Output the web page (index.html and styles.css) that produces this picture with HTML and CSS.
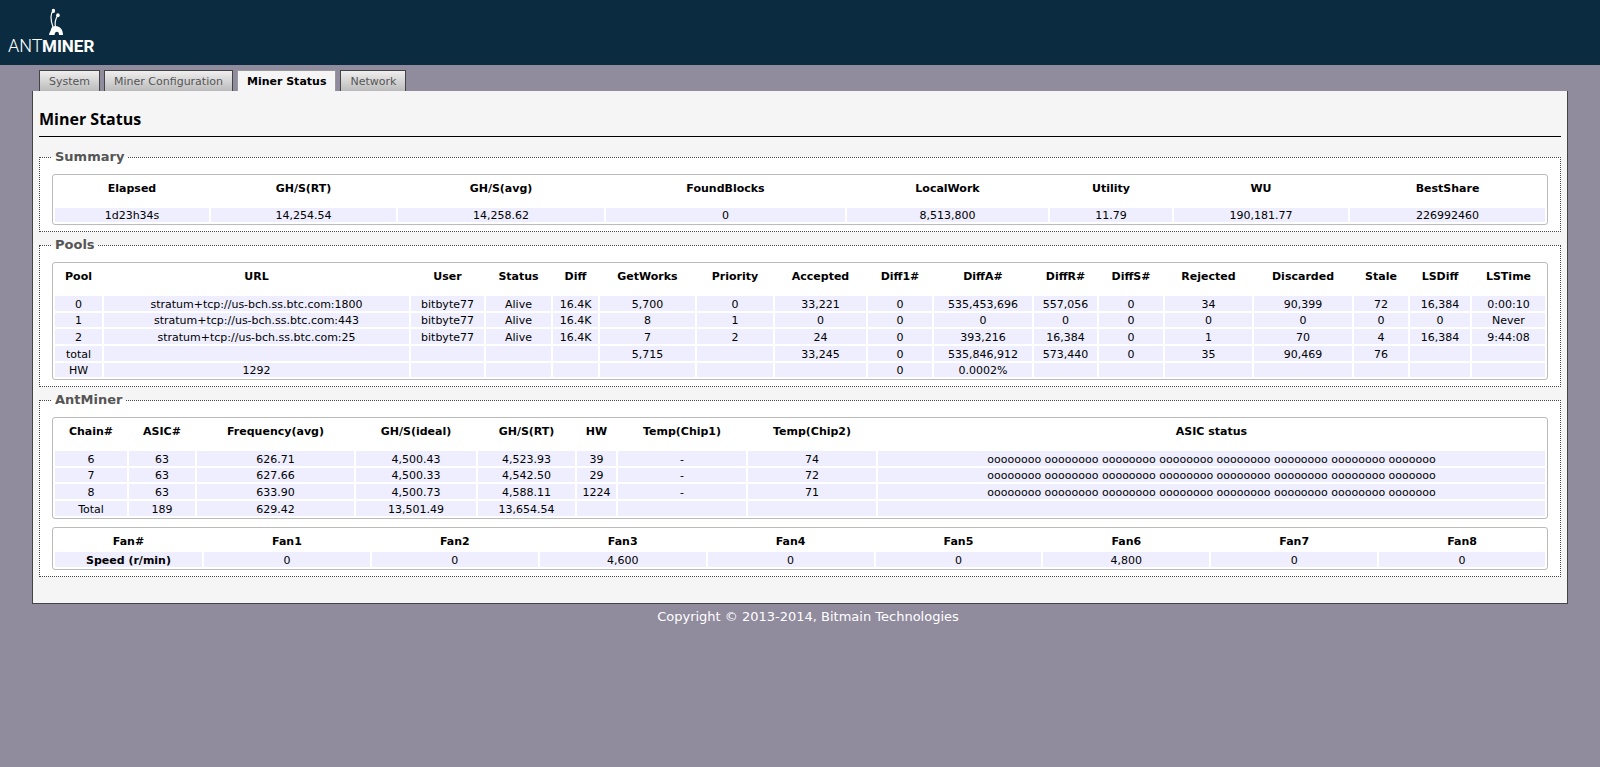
FILE: index.html
```html
<!DOCTYPE html>
<html lang="en">
<head>
<meta charset="utf-8">
<title>Miner Status</title>
<link rel="stylesheet" href="styles.css">
</head>
<body>
<header class="header">
  <svg class="logo" viewBox="0 0 92 48" role="img" aria-label="AntMiner">
    <g fill="none" stroke="#fff">
      <path d="M45 19C43.500 15 43 12 43 9C43 6 43.700 4.500 45 3" stroke-width="1.200"/>
      <path d="M47.500 19.500C46.500 15 47 11.500 49.700 7.500" stroke-width="1.200"/>
    </g>
    <ellipse cx="45.400" cy="2.900" rx="1.700" ry="2.100" fill="#fff"/>
    <ellipse cx="49.900" cy="7.300" rx="1.800" ry="2" fill="#fff"/>
    <path d="M41 27C41.500 24 43 22.500 43.300 20.500C44 18.700 45.500 18 47.500 18C52 18 55 21.500 55 27H51C51 24.800 50.300 23.800 49 23.800C47.500 23.800 46.800 25 46.500 27Z" fill="#fff"/>
    <text class="logo-light" x="0" y="44">ANT</text>
    <text class="logo-bold" x="34" y="44">MINER</text>
  </svg>
</header>
<div class="page">
  <nav>
    <ul class="tabs">
      <li><a class="tab" href="#system">System</a></li>
      <li><a class="tab" href="#configuration">Miner Configuration</a></li>
      <li><a class="tab tab-active" href="#status" aria-current="page">Miner Status</a></li>
      <li><a class="tab" href="#network">Network</a></li>
    </ul>
  </nav>
  <main class="content">
    <h1 class="title">Miner Status</h1>
    <fieldset class="section">
      <legend>Summary</legend>
      <table class="grid summary">
        <colgroup><col class="s1"><col class="s2"><col class="s3"><col class="s4"><col class="s5"><col class="s6"><col class="s7"><col class="s8"></colgroup>
        <thead><tr><th>Elapsed</th><th>GH/S(RT)</th><th>GH/S(avg)</th><th>FoundBlocks</th><th>LocalWork</th><th>Utility</th><th>WU</th><th>BestShare</th></tr></thead>
        <tbody><tr><td>1d23h34s</td><td>14,254.54</td><td>14,258.62</td><td>0</td><td>8,513,800</td><td>11.79</td><td>190,181.77</td><td>226992460</td></tr></tbody>
      </table>
    </fieldset>
    <fieldset class="section">
      <legend>Pools</legend>
      <table class="grid">
        <colgroup><col class="p1"><col class="p2"><col class="p3"><col class="p4"><col class="p5"><col class="p6"><col class="p7"><col class="p8"><col class="p9"><col class="p10"><col class="p11"><col class="p12"><col class="p13"><col class="p14"><col class="p15"><col class="p16"><col class="p17"></colgroup>
        <thead><tr><th>Pool</th><th>URL</th><th>User</th><th>Status</th><th>Diff</th><th>GetWorks</th><th>Priority</th><th>Accepted</th><th>Diff1#</th><th>DiffA#</th><th>DiffR#</th><th>DiffS#</th><th>Rejected</th><th>Discarded</th><th>Stale</th><th>LSDiff</th><th>LSTime</th></tr></thead>
        <tbody>
          <tr><td>0</td><td>stratum+tcp://us-bch.ss.btc.com:1800</td><td>bitbyte77</td><td>Alive</td><td>16.4K</td><td>5,700</td><td>0</td><td>33,221</td><td>0</td><td>535,453,696</td><td>557,056</td><td>0</td><td>34</td><td>90,399</td><td>72</td><td>16,384</td><td>0:00:10</td></tr>
          <tr><td>1</td><td>stratum+tcp://us-bch.ss.btc.com:443</td><td>bitbyte77</td><td>Alive</td><td>16.4K</td><td>8</td><td>1</td><td>0</td><td>0</td><td>0</td><td>0</td><td>0</td><td>0</td><td>0</td><td>0</td><td>0</td><td>Never</td></tr>
          <tr><td>2</td><td>stratum+tcp://us-bch.ss.btc.com:25</td><td>bitbyte77</td><td>Alive</td><td>16.4K</td><td>7</td><td>2</td><td>24</td><td>0</td><td>393,216</td><td>16,384</td><td>0</td><td>1</td><td>70</td><td>4</td><td>16,384</td><td>9:44:08</td></tr>
          <tr><td>total</td><td></td><td></td><td></td><td></td><td>5,715</td><td></td><td>33,245</td><td>0</td><td>535,846,912</td><td>573,440</td><td>0</td><td>35</td><td>90,469</td><td>76</td><td></td><td></td></tr>
          <tr><td>HW</td><td>1292</td><td></td><td></td><td></td><td></td><td></td><td></td><td>0</td><td>0.0002%</td><td></td><td></td><td></td><td></td><td></td><td></td><td></td></tr>
        </tbody>
      </table>
    </fieldset>
    <fieldset class="section">
      <legend>AntMiner</legend>
      <table class="grid">
        <colgroup><col class="a1"><col class="a2"><col class="a3"><col class="a4"><col class="a5"><col class="a6"><col class="a7"><col class="a7"><col class="a9"></colgroup>
        <thead><tr><th>Chain#</th><th>ASIC#</th><th>Frequency(avg)</th><th>GH/S(ideal)</th><th>GH/S(RT)</th><th>HW</th><th>Temp(Chip1)</th><th>Temp(Chip2)</th><th>ASIC status</th></tr></thead>
        <tbody>
          <tr><td>6</td><td>63</td><td>626.71</td><td>4,500.43</td><td>4,523.93</td><td>39</td><td>-</td><td>74</td><td>oooooooo oooooooo oooooooo oooooooo oooooooo oooooooo oooooooo ooooooo</td></tr>
          <tr><td>7</td><td>63</td><td>627.66</td><td>4,500.33</td><td>4,542.50</td><td>29</td><td>-</td><td>72</td><td>oooooooo oooooooo oooooooo oooooooo oooooooo oooooooo oooooooo ooooooo</td></tr>
          <tr><td>8</td><td>63</td><td>633.90</td><td>4,500.73</td><td>4,588.11</td><td>1224</td><td>-</td><td>71</td><td>oooooooo oooooooo oooooooo oooooooo oooooooo oooooooo oooooooo ooooooo</td></tr>
          <tr><td>Total</td><td>189</td><td>629.42</td><td>13,501.49</td><td>13,654.54</td><td></td><td></td><td></td><td></td></tr>
        </tbody>
      </table>
      <table class="grid fans">
        <colgroup><col class="f1"><col span="8"></colgroup>
        <thead><tr><th>Fan#</th><th>Fan1</th><th>Fan2</th><th>Fan3</th><th>Fan4</th><th>Fan5</th><th>Fan6</th><th>Fan7</th><th>Fan8</th></tr></thead>
        <tbody><tr><th scope="row">Speed (r/min)</th><td>0</td><td>0</td><td>4,600</td><td>0</td><td>0</td><td>4,800</td><td>0</td><td>0</td></tr></tbody>
      </table>
    </fieldset>
  </main>
</div>
<footer class="footer">Copyright © 2013-2014, Bitmain Technologies</footer>
</body>
</html>
```
FILE: styles.css
```css
* { box-sizing: border-box; }

body {
  margin: 0;
  background: #918b9e;
  color: #000;
  font: 11px/15px Verdana, "DejaVu Sans", sans-serif;
}

.header {
  height: 65px;
  padding: 8px;
  background: #0b2c40;
}

.logo {
  display: block;
  width: 92px;
  height: 48px;
  fill: #fff;
}

.logo-light { font: 300 18px Roboto, sans-serif; }
.logo-bold { font: 700 17px Roboto, sans-serif; }

.page { padding: 5px 32px 0; }

.tabs {
  display: flex;
  gap: 4px;
  margin: 0;
  padding: 0 7px;
  list-style: none;
}

.tab {
  display: block;
  height: 21px;
  padding: 3px 9px 0;
  border: 1px solid #444;
  border-bottom: 0;
  background: linear-gradient(#eee, #bbb);
  color: #555;
  text-decoration: none;
  white-space: nowrap;
}

.tab-active {
  border-color: #999;
  background: #f5f5f5;
  color: #000;
  font-weight: bold;
}

.content {
  padding: 16px 6px 21px;
  border: 1px solid #444;
  border-top: 0;
  background: #f5f5f5;
}

.title {
  margin: 0 0 12px;
  padding-bottom: 5px;
  border-bottom: 1px solid #000;
  font: bold 16px/24px "Trebuchet MS", "Open Sans", sans-serif;
}

.section {
  min-width: 0;
  margin: 0 0 5px;
  padding: 9px 12px 6px;
  border: 1px dotted #444;
  background: #fff;
}

.section legend {
  padding: 0 3px;
  color: #555;
  font-size: 13px;
  font-weight: bold;
  line-height: 16px;
}

.grid {
  width: 100%;
  table-layout: fixed;
  border: 1px solid #bbb;
  border-collapse: separate;
  border-spacing: 2px;
  border-radius: 3px;
  text-align: center;
}

.grid th, .grid td { white-space: nowrap; }
.grid thead th { padding: 4px 0 10px; }
.grid tbody td, .grid tbody th {
  height: 15px;
  padding: 2px 0 0;
  background: #eef;
  line-height: 13px;
}
.grid tbody tr:nth-child(3n+2) td,
.summary tbody td { height: 14px; padding-top: 1px; }

.fans { margin-top: 8px; }
.fans thead th { padding-bottom: 1px; }

.s1 { width: 154px; } .s2 { width: 185px; } .s3 { width: 206px; } .s4 { width: 239px; }
.s5 { width: 201px; } .s6 { width: 122px; } .s7 { width: 174px; } .s8 { width: 195px; }

.p1 { width: 47px; } .p2 { width: 305px; } .p3 { width: 73px; } .p4 { width: 65px; }
.p5 { width: 45px; } .p6 { width: 95px; } .p7 { width: 76px; } .p8 { width: 91px; }
.p9 { width: 64px; } .p10 { width: 98px; } .p11 { width: 63px; } .p12 { width: 64px; }
.p13 { width: 87px; } .p14 { width: 98px; } .p15 { width: 54px; } .p16 { width: 60px; }
.p17 { width: 73px; }

.a1 { width: 72px; } .a2 { width: 66px; } .a3 { width: 157px; } .a4 { width: 120px; }
.a5 { width: 97px; } .a6 { width: 39px; } .a7 { width: 128px; } .a9 { width: 667px; }

.f1 { width: 147px; }

.footer {
  padding: 4px 0 0 16px;
  color: #fff;
  font-size: 13px;
  line-height: 18px;
  text-align: center;
}
```
